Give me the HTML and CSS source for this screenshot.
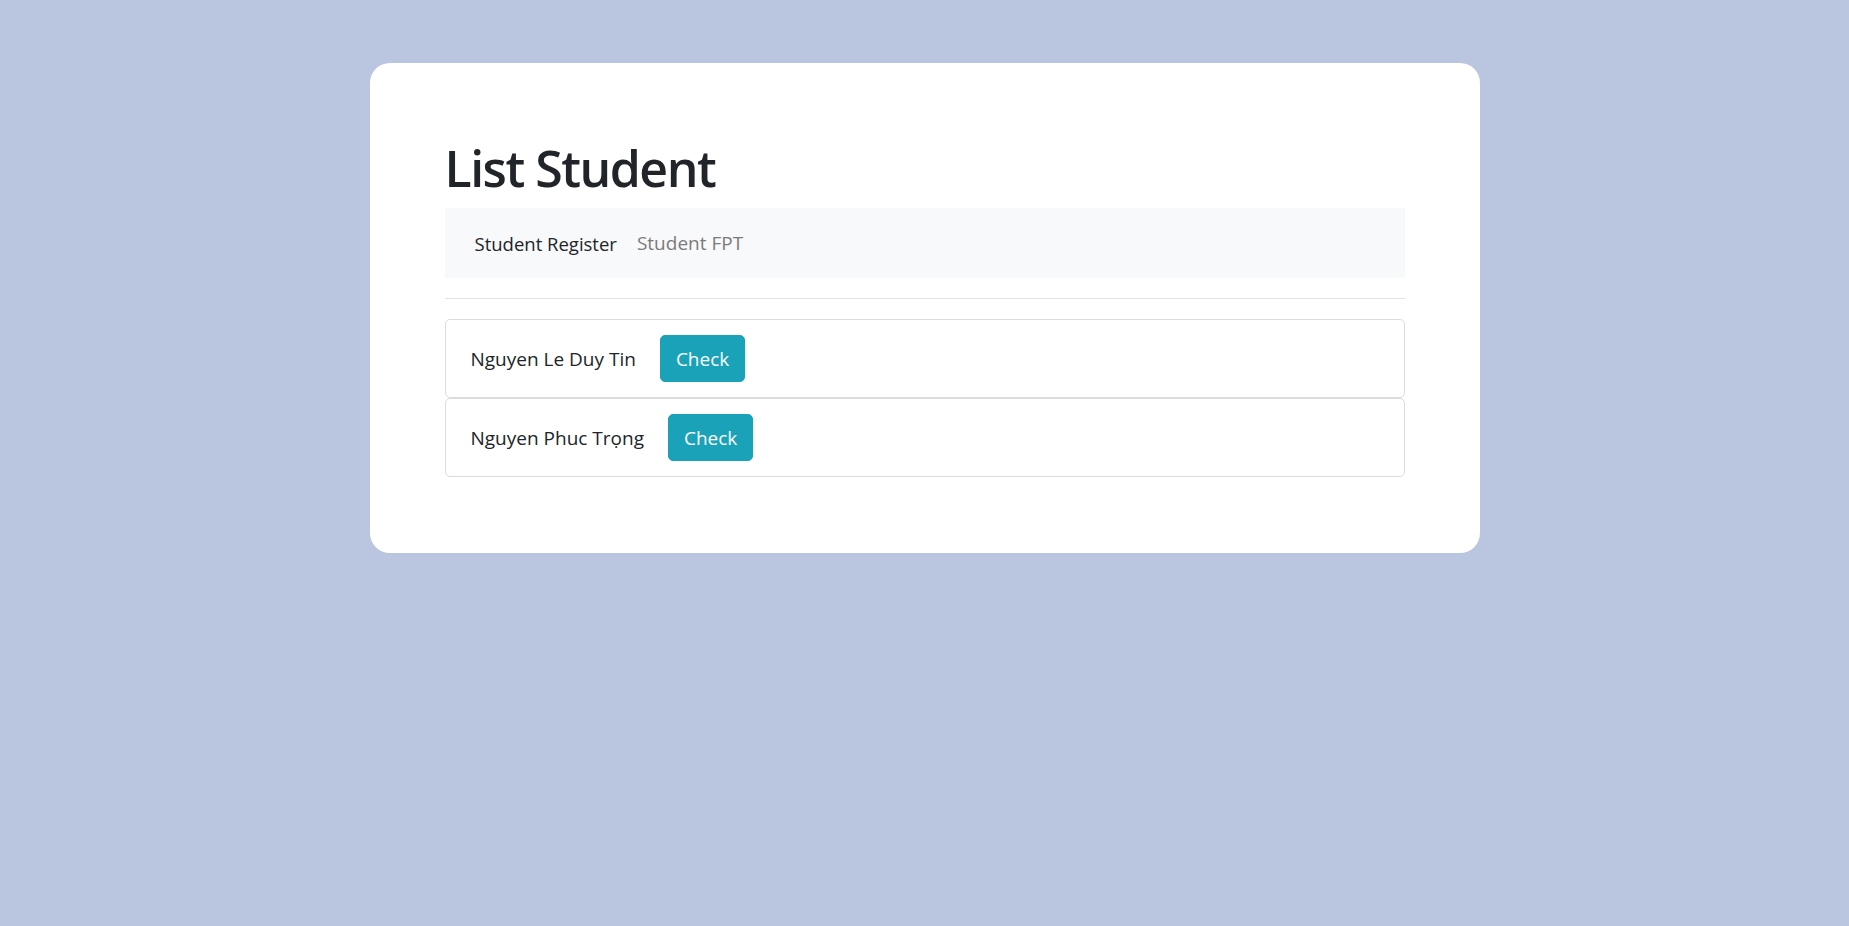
FILE: index.html
```html
<!DOCTYPE html>
<html lang="en">
<head>
<meta charset="utf-8">
<title>List Student</title>
<link rel="stylesheet" href="styles.css">
</head>
<body>
<main class="page">
  <section class="card">
    <h1 class="title">List Student</h1>
    <nav class="navbar">
      <span class="brand">Student Register</span>
      <span class="nav-link">Student FPT</span>
    </nav>
    <hr class="divider">
    <ul class="list">
      <li class="item"><span class="name">Nguyen Le Duy Tin</span><button class="btn">Check</button></li>
      <li class="item"><span class="name">Nguyen Phuc Trọng</span><button class="btn">Check</button></li>
    </ul>
  </section>
</main>
</body>
</html>
```

FILE: styles.css
```css
html, body {
  margin: 0;
  padding: 0;
}
body {
  background: #bac6e0;
  font-family: "Open Sans", "Noto Sans", "Liberation Sans", sans-serif;
  color: #212529;
  min-height: 926px;
}
.page {
  padding-top: 63px;
  display: flex;
  justify-content: center;
}
.card {
  width: 1110px;
  box-sizing: border-box;
  background: #ffffff;
  border-radius: 20px;
  padding: 75px 75px 76px;
}
.title {
  margin: 0 0 10px;
  font-size: 50px;
  line-height: 60px;
  font-weight: 600;
  letter-spacing: -1.5px;
  color: #212529;
}
.navbar {
  background: #f8f9fa;
  height: 70px;
  box-sizing: border-box;
  padding: 0 30px;
  display: flex;
  align-items: center;
  gap: 20px;
  font-size: 18.5px;
}
.brand {
  color: #212529;
}
.nav-link {
  color: #7b7b7b;
  font-size: 19px;
}
.divider {
  margin: 20px 0;
  border: 0;
  border-top: 1px solid #e1e3e6;
}
.list {
  list-style: none;
  margin: 0;
  padding: 0;
}
.item {
  display: flex;
  align-items: center;
  gap: 24px;
  padding: 15px 25px;
  border: 1px solid #dcdcdc;
  border-radius: 5px;
  font-size: 19px;
  line-height: 30px;
}
.name {
  color: #212529;
}
.btn {
  font-family: inherit;
  font-size: 19px;
  line-height: 30px;
  padding: 7.5px 15px;
  color: #ffffff;
  background: #19a2b8;
  border: 1px solid #19a2b8;
  border-radius: 5px;
  cursor: pointer;
}
```
